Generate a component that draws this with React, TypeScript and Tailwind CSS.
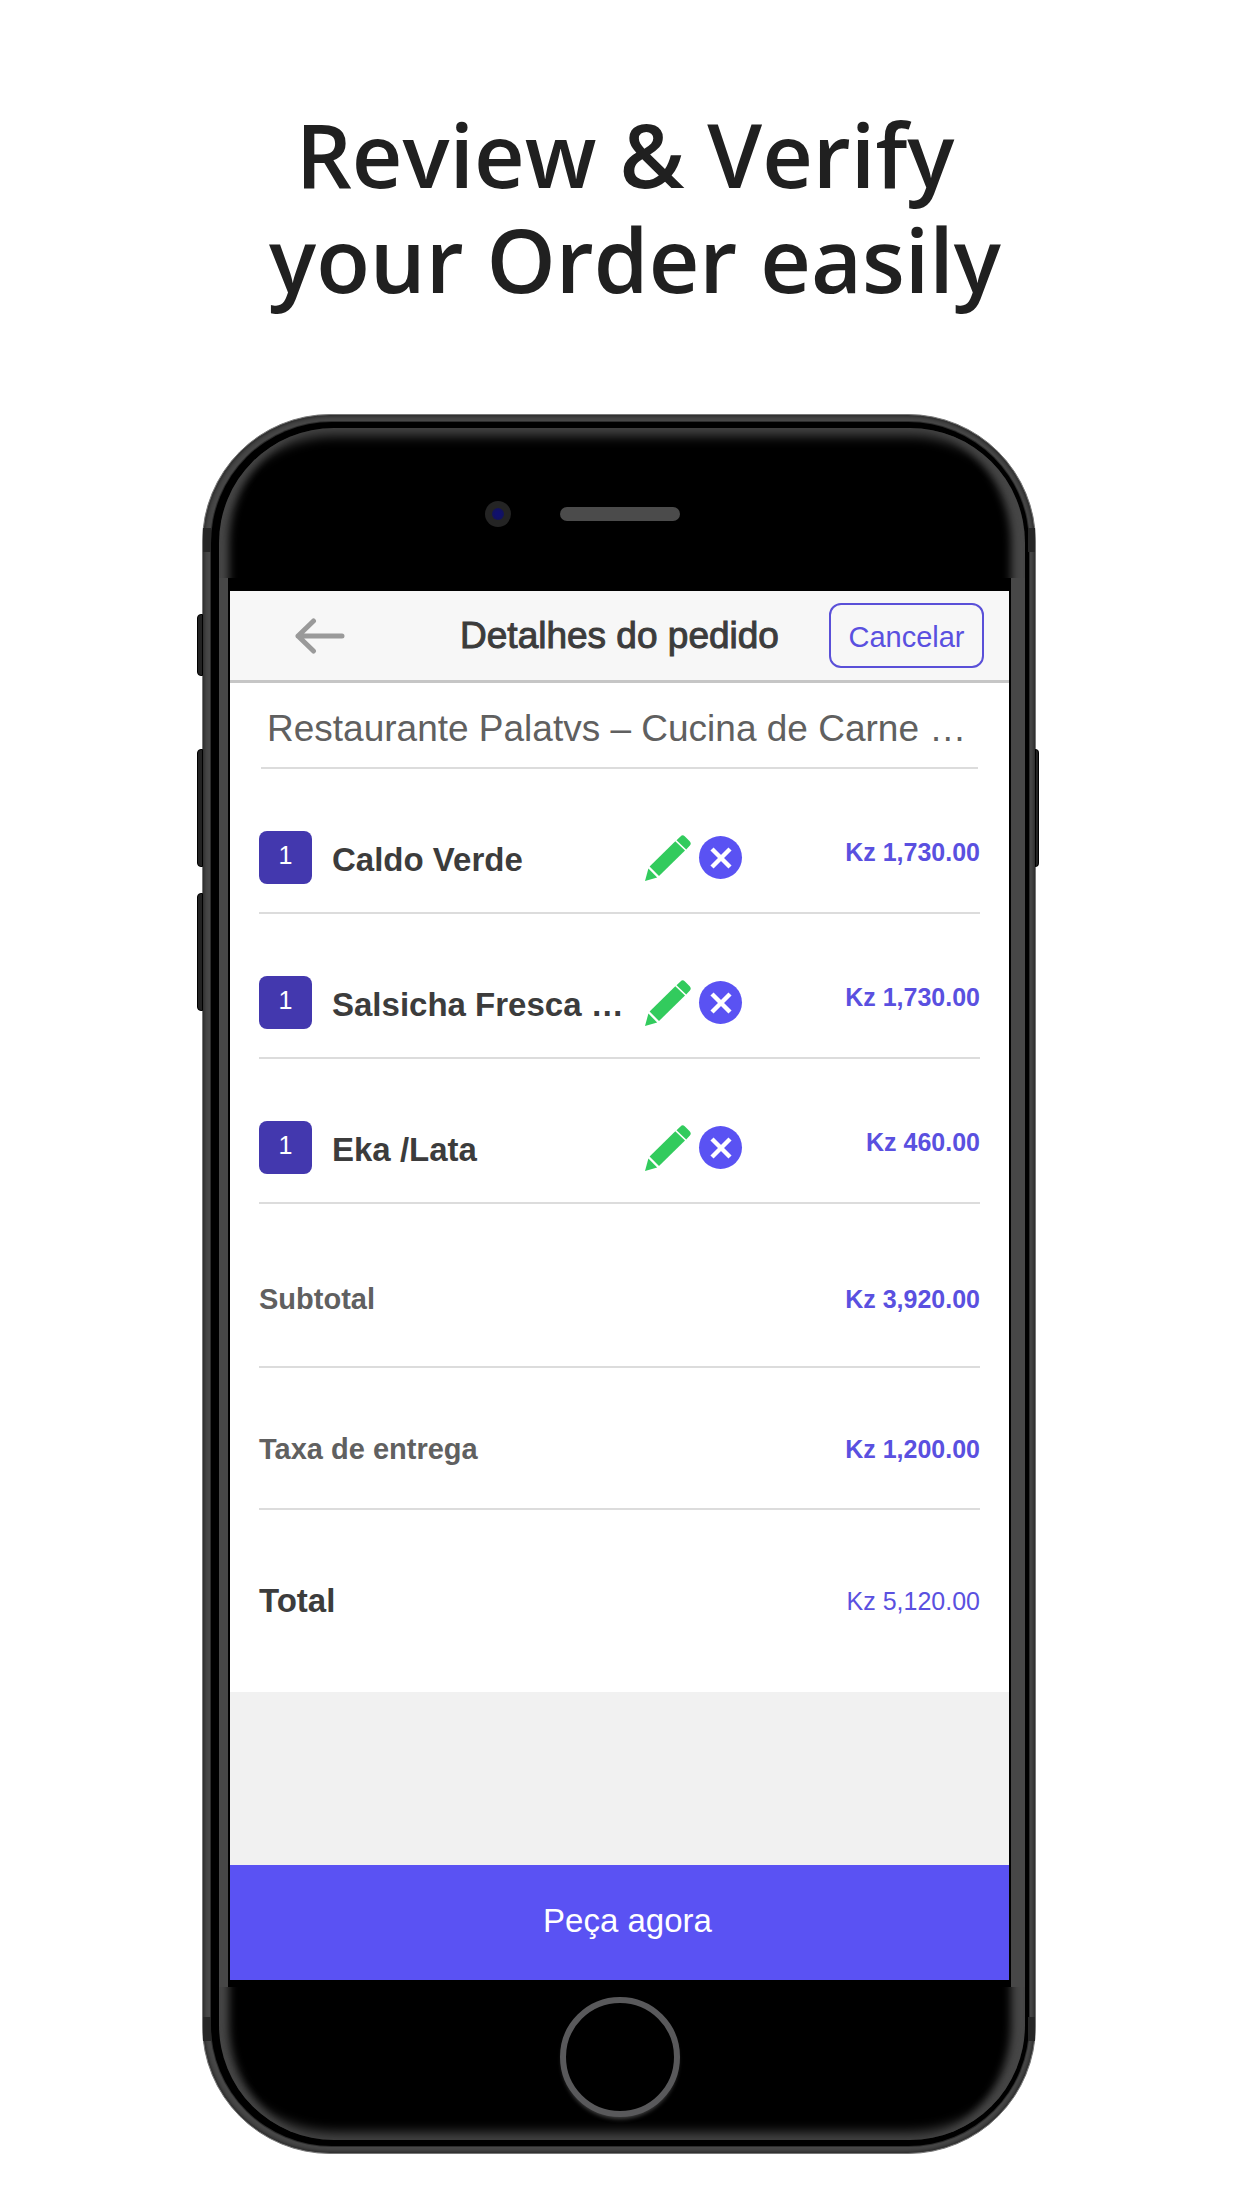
import { X } from "lucide-react";

type OrderItem = {
  name: string;
  quantity: number;
  price: string;
};

const items: OrderItem[] = [
  { name: "Caldo Verde", quantity: 1, price: "Kz 1,730.00" },
  { name: "Salsicha Fresca …", quantity: 1, price: "Kz 1,730.00" },
  { name: "Eka /Lata", quantity: 1, price: "Kz 460.00" },
];

function BackArrow() {
  return (
    <svg className="h-9 w-[50px]" viewBox="0 0 50 36" fill="none" stroke="#9a9a9a" strokeWidth="5" strokeLinecap="round" strokeLinejoin="round">
      <path d="M47 18H3M18.5 3L3 18l15.5 15" />
    </svg>
  );
}

function Pencil() {
  return (
    <svg className="h-[46px] w-[46px]" viewBox="0 0 46 46" fill="#32cb5d">
      <path d="M35.5 1.5q2-2.200 4.200-.3l5 5q2 2.200.2 4.400L41.200 14.500 31.500 5.200z" />
      <path d="M30.300 6.200L40 15.600 14 41 4.600 31.500z" />
      <path d="M3.400 33.600L12.200 42.500 0 46z" />
    </svg>
  );
}

// Side keys and antenna bands of the handset
function PhoneKeys() {
  return (
    <>
      <span className="absolute -left-1.5 top-[199px] h-[62px] w-1.5 rounded-l-sm border border-black bg-[#222]" />
      <span className="absolute -left-1.5 top-[334px] h-[118px] w-1.5 rounded-l-sm border border-black bg-[#222]" />
      <span className="absolute -left-1.5 top-[478px] h-[118px] w-1.5 rounded-l-sm border border-black bg-[#222]" />
      <span className="absolute -right-1 top-[334px] h-[118px] w-1 rounded-r-sm border border-black bg-[#222]" />
      <span className="absolute left-0 top-[113px] h-6 w-2 bg-[#262626]" />
      <span className="absolute right-0 top-[113px] h-6 w-[7px] bg-[#262626]" />
      <span className="absolute bottom-[112px] left-0 h-6 w-2 bg-[#262626]" />
      <span className="absolute bottom-[112px] right-0 h-6 w-[7px] bg-[#262626]" />
    </>
  );
}

function ItemRow({ item }: { item: OrderItem }) {
  return (
    <li className="grid grid-cols-[53px_minmax(0,7fr)_97px_minmax(0,5fr)] items-center border-b-2 border-[#dcdcdc] pb-[28px] pt-[62px]">
      <span className="flex h-[53px] items-center justify-center rounded-lg bg-[#4338ae] pb-1 text-[25px] text-white">
        {item.quantity}
      </span>
      <span className="truncate pl-5 pt-1 text-[33px] leading-10 font-bold text-[#3c3c3c]">{item.name}</span>
      <span className="flex items-center justify-between">
        <button aria-label={`Editar ${item.name}`}>
          <Pencil />
        </button>
        <button aria-label={`Remover ${item.name}`} className="flex h-[43px] w-[43px] items-center justify-center rounded-full bg-[#5a52f3] text-white">
          <X size={36} strokeWidth={3} strokeLinecap="butt" />
        </button>
      </span>
      <span className="pb-3 text-right text-[25px] leading-10 font-bold text-[#5a50e0]">{item.price}</span>
    </li>
  );
}

export default function App() {
  return (
    <main className="min-h-screen bg-white pb-14 pr-1 font-['Liberation_Sans',Arial,sans-serif]">
      <h1 className="pl-3 pt-[102px] text-center font-['Open_Sans',sans-serif] text-[88px] leading-[105px] font-semibold text-[#202020]">
        Review &amp; Verify
        <br />
        <span className="pl-5">your Order easily</span>
      </h1>

      <div className="relative mx-auto mt-[102px] w-full max-w-[834px] rounded-[128px] border border-[#777] bg-[#484848] py-[7px] pl-2 pr-1.5 shadow-[inset_0_0_5px_#111]">
        <PhoneKeys />
        <div className="rounded-[121px] bg-black py-1.5 pl-2 pr-1 shadow-[0_0_0_1px_#2c2c2c]">
          <div className="rounded-[115px] bg-black shadow-[inset_0_20px_12px_-12px_#444,inset_0_-20px_12px_-12px_#444,inset_20px_0_8px_-10px_#474747,inset_-24px_0_8px_-10px_#474747]">
            <div className="relative flex h-[150px] items-center justify-center pr-1 pt-[22px]">
              <span className="h-3.5 w-[120px] rounded-full bg-[#4b4b4b]" />
              <span className="absolute left-1/2 -ml-[137px] flex h-[26px] w-[26px] items-center justify-center rounded-full bg-[#242424]">
                <span className="h-3 w-3 rounded-full bg-[radial-gradient(circle,#10106c_30%,#15154a)]" />
              </span>
            </div>

            <div className="bg-[#474747] pl-[9px] pr-[14px]">
              <div className="bg-black px-0.5 pb-[7px] pt-[13px]">
                <div className="bg-white">
                  <header className="grid grid-cols-[1fr_auto_1fr] items-center border-b-3 border-[#c6c6c6] bg-[#f7f7f7] pb-3 pt-3">
                    <button aria-label="Voltar" className="justify-self-start pl-[65px]">
                      <BackArrow />
                    </button>
                    <h2 className="text-[37px] leading-10 text-[#3c3c3c] [-webkit-text-stroke:1px_#3c3c3c]">Detalhes do pedido</h2>
                    <button className="mr-[25px] h-[65px] w-[155px] justify-self-end rounded-xl border-2 border-[#5a50d8] pt-1 text-[29px] text-[#5a50e0]">
                      Cancelar
                    </button>
                  </header>

                  <div className="px-[29px]">
                    <p className="mx-0.5 border-b-2 border-[#dcdcdc] pb-[18px] pl-1.5 pt-[26px] text-[37px] leading-10 whitespace-nowrap text-[#606060]">
                      Restaurante Palatvs – Cucina de Carne …
                    </p>
                    <ul>
                      {items.map((item, index) => (
                        <ItemRow key={index} item={item} />
                      ))}
                    </ul>
                    <div className="flex justify-between border-b-2 border-[#dcdcdc] pb-[47px] pt-[75px] leading-10 font-bold">
                      <span className="text-[29px] text-[#606060]">Subtotal</span>
                      <span className="text-[25px] text-[#5a50e0]">Kz 3,920.00</span>
                    </div>
                    <div className="flex justify-between border-b-2 border-[#dcdcdc] pb-[39px] pt-[61px] leading-10 font-bold">
                      <span className="text-[29px] text-[#606060]">Taxa de entrega</span>
                      <span className="text-[25px] text-[#5a50e0]">Kz 1,200.00</span>
                    </div>
                    <div className="flex justify-between pb-[71px] pt-[71px] leading-10">
                      <span className="text-[33px] font-bold text-[#3c3c3c]">Total</span>
                      <span className="text-[25px] text-[#5a50e0]">Kz 5,120.00</span>
                    </div>
                  </div>

                  <div className="h-[173px] bg-[#f1f1f1]" />
                  <button className="block h-[115px] w-full bg-[#5a52f3] pb-1 pl-4 text-[33px] text-white">Peça agora</button>
                </div>
              </div>
            </div>

            <div className="flex h-[153px] justify-center pr-1 pt-2.5">
              <span className="h-[120px] w-[120px] rounded-full border-[6px] border-[#59595b] bg-black shadow-[0_4px_4px_-2px_#444]" />
            </div>
          </div>
        </div>
      </div>
    </main>
  );
}
